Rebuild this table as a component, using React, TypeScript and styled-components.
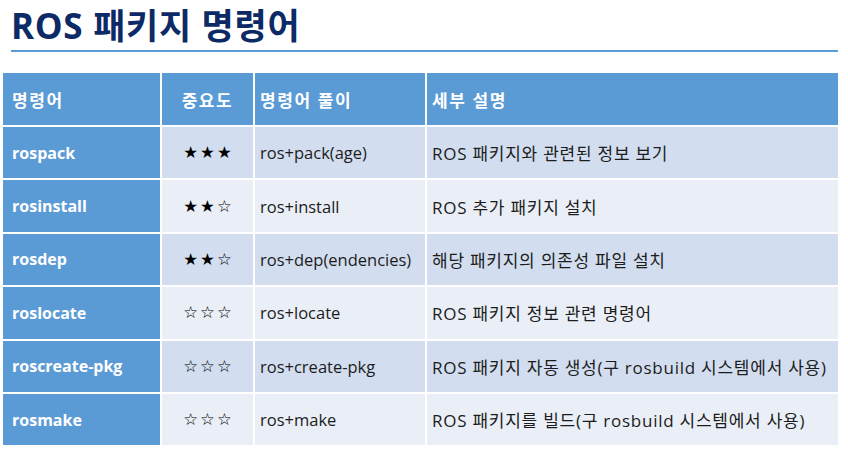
import React from "react";
import styled, { createGlobalStyle } from "styled-components";

const GlobalStyle = createGlobalStyle`
  html, body {
    margin: 0;
    padding: 0;
    background: #ffffff;
  }
  body {
    font-family: "Open Sans", "Noto Sans CJK KR", sans-serif;
  }
`;

const Page = styled.div`
  width: 848px;
  height: 466px;
  padding: 0 10px 0 3px;
  box-sizing: border-box;
  overflow: hidden;
`;

const TitleBar = styled.div`
  margin-left: 8px;
  padding-top: 4px;
  height: 46px;
  border-bottom: 2px solid #5b9bd5;
  box-sizing: content-box;
`;

const Title = styled.h1`
  margin: 0;
  font-family: "Open Sans", "Noto Sans CJK KR", sans-serif;
  font-size: 35px;
  line-height: 44px;
  font-weight: 700;
  color: #0c2a65;
  letter-spacing: 0.7px;
`;

const Table = styled.div`
  margin-top: 21px;
  display: grid;
  grid-template-columns: 157px 91px 170px 411px;
  grid-template-rows: 52px;
  grid-auto-rows: 51.4px;
  gap: 2px;
  background: #ffffff;
`;

type Tone = "head" | "key" | "dark" | "light";

const Cell = styled.div<{ $tone: Tone; $center?: boolean; $wide?: boolean }>`
  display: flex;
  align-items: center;
  justify-content: ${(p) => (p.$center ? "center" : "flex-start")};
  padding: 0 ${(p) => (p.$center ? "0" : "5px")};
  font-size: ${(p) => (p.$wide ? "17px" : "16.5px")};
  letter-spacing: ${(p) => (p.$wide ? "0.75px" : "0")};
  white-space: nowrap;
  background: ${(p) =>
    p.$tone === "head" || p.$tone === "key"
      ? "#5b9bd5"
      : p.$tone === "dark"
      ? "#d2deef"
      : "#eaeff7"};
  color: ${(p) => (p.$tone === "head" || p.$tone === "key" ? "#ffffff" : "#1c1c1c")};
  font-weight: ${(p) => (p.$tone === "head" || p.$tone === "key" ? 700 : 400)};
`;

const HeadCell = styled(Cell)<{ $first?: boolean }>`
  font-size: 17px;
  letter-spacing: 1.6px;
  padding-left: ${(p) => (p.$first ? "9px" : p.$center ? "0" : "5px")};
`;

const KeyCell = styled(Cell)`
  padding-left: 9px;
  font-size: 16px;
  letter-spacing: 0;
`;

const Stars = styled.span`
  font-family: "DejaVu Sans", sans-serif;
  font-size: 16.5px;
  letter-spacing: 2px;
  margin-right: -2px;
  color: #000000;
  font-weight: 400;
`;

const rows = [
  ["rospack", 3, "ros+pack(age)", "ROS 패키지와 관련된 정보 보기"],
  ["rosinstall", 2, "ros+install", "ROS 추가 패키지 설치"],
  ["rosdep", 2, "ros+dep(endencies)", "해당 패키지의 의존성 파일 설치"],
  ["roslocate", 0, "ros+locate", "ROS 패키지 정보 관련 명령어"],
  ["roscreate-pkg", 0, "ros+create-pkg", "ROS 패키지 자동 생성(구 rosbuild 시스템에서 사용)"],
  ["rosmake", 0, "ros+make", "ROS 패키지를 빌드(구 rosbuild 시스템에서 사용)"],
] as const;

const starText = (n: number) => "★".repeat(n) + "☆".repeat(3 - n);

export default function App() {
  return (
    <Page>
      <GlobalStyle />
      <TitleBar>
        <Title>ROS 패키지 명령어</Title>
      </TitleBar>
      <Table>
        <HeadCell $tone="head" $first>
          명령어
        </HeadCell>
        <HeadCell $tone="head" $center>
          중요도
        </HeadCell>
        <HeadCell $tone="head">명령어 풀이</HeadCell>
        <HeadCell $tone="head">세부 설명</HeadCell>
        {rows.map(([name, stars, expl, desc], i) => {
          const tone = i % 2 === 0 ? "dark" : "light";
          return (
            <React.Fragment key={name}>
              <KeyCell $tone="key">{name}</KeyCell>
              <Cell $tone={tone} $center>
                <Stars>{starText(stars)}</Stars>
              </Cell>
              <Cell $tone={tone}>{expl}</Cell>
              <Cell $tone={tone} $wide>
                {desc}
              </Cell>
            </React.Fragment>
          );
        })}
      </Table>
    </Page>
  );
}
